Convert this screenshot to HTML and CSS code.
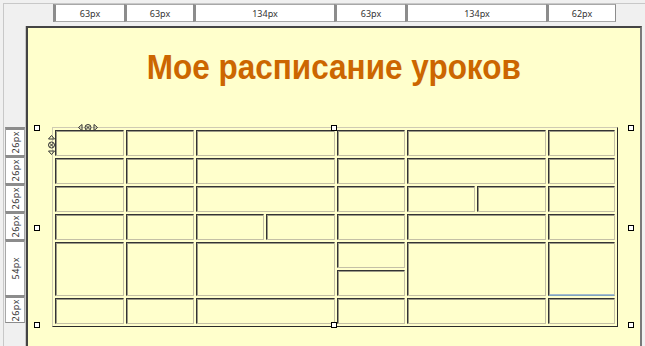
FILE: index.html
```html
<!DOCTYPE html>
<html lang="ru">
<head>
<meta charset="utf-8">
<title>Мое расписание уроков</title>
<link rel="stylesheet" href="styles.css">
</head>
<body>
<div class="editor">
  <div class="frame">
    <div class="top-ruler">
      <div class="rcell w71">63px</div>
      <div class="rcell w69">63px</div>
      <div class="rcell w141">134px</div>
      <div class="rcell w71">63px</div>
      <div class="rcell w141">134px</div>
      <div class="rcell w70 last">62px</div>
    </div>
    <div class="workspace">
      <div class="left-ruler">
        <div class="vcell"><span>26px</span></div>
        <div class="vcell"><span>26px</span></div>
        <div class="vcell"><span>26px</span></div>
        <div class="vcell"><span>26px</span></div>
        <div class="vcell tall"><span>54px</span></div>
        <div class="vcell last"><span>26px</span></div>
      </div>
      <div class="page">
        <h1 class="title"><span>Мое расписание уроков</span></h1>
        <div class="table-wrap">
          <div class="sched">
            <!-- row 1 -->
            <div class="cell"></div><div class="cell"></div><div class="cell s2"></div><div class="cell"></div><div class="cell s2"></div><div class="cell"></div>
            <!-- row 2 -->
            <div class="cell"></div><div class="cell"></div><div class="cell s2"></div><div class="cell"></div><div class="cell s2"></div><div class="cell"></div>
            <!-- row 3 -->
            <div class="cell"></div><div class="cell"></div><div class="cell s2"></div><div class="cell"></div><div class="cell"></div><div class="cell"></div><div class="cell"></div>
            <!-- row 4 -->
            <div class="cell"></div><div class="cell"></div><div class="cell"></div><div class="cell"></div><div class="cell"></div><div class="cell s2"></div><div class="cell"></div>
            <!-- row 5 (double height) -->
            <div class="cell r2"></div><div class="cell r2"></div><div class="cell s2 r2"></div><div class="cell"></div><div class="cell s2 r2"></div><div class="cell r2 sel"></div>
            <div class="cell"></div>
            <!-- row 6 -->
            <div class="cell"></div><div class="cell"></div><div class="cell s2"></div><div class="cell"></div><div class="cell s2"></div><div class="cell"></div>
          </div>
          <svg class="marker marker-h" width="20" height="7" viewBox="0 0 20 7">
            <polygon points="4,0.5 0.5,3.5 4,6.5" fill="none" stroke="#333" stroke-width="1"/>
            <circle cx="10" cy="3.5" r="3" fill="none" stroke="#333" stroke-width="1"/>
            <path d="M8.2 1.7 L11.8 5.3 M11.8 1.7 L8.2 5.3" stroke="#333" stroke-width="1"/>
            <polygon points="16,0.5 19.5,3.5 16,6.5" fill="none" stroke="#333" stroke-width="1"/>
          </svg>
          <svg class="marker marker-v" width="7" height="20" viewBox="0 0 7 20">
            <polygon points="0.5,4 3.5,0.5 6.5,4" fill="none" stroke="#333" stroke-width="1"/>
            <circle cx="3.5" cy="10" r="3" fill="none" stroke="#333" stroke-width="1"/>
            <path d="M1.7 8.2 L5.3 11.8 M5.3 8.2 L1.7 11.8" stroke="#333" stroke-width="1"/>
            <polygon points="0.5,16 3.5,19.5 6.5,16" fill="none" stroke="#333" stroke-width="1"/>
          </svg>
          <span class="handle h-tl"></span>
          <span class="handle h-tm"></span>
          <span class="handle h-tr"></span>
          <span class="handle h-ml"></span>
          <span class="handle h-mr"></span>
          <span class="handle h-bl"></span>
          <span class="handle h-bm"></span>
          <span class="handle h-br"></span>
        </div>
      </div>
    </div>
  </div>
</div>
</body>
</html>
```

FILE: styles.css
```css
* { box-sizing: border-box; }

html, body {
  margin: 0;
  padding: 0;
}

body {
  width: 645px;
  height: 346px;
  overflow: hidden;
  background: #f0f0f0;
  font-family: "Liberation Sans", Arial, sans-serif;
}

.editor {
  width: 645px;
  height: 346px;
  padding: 3px 0 0 3px;
}

.frame {
  height: 100%;
  border-top: 1px solid #c8c8c8;
  border-left: 1px solid #c8c8c8;
  display: flex;
  flex-direction: column;
}

/* top ruler */
.top-ruler {
  flex: none;
  height: 22px;
  display: flex;
  padding-left: 49px;
}

.rcell {
  height: 18px;
  background: #ffffff;
  border: 1px solid #a8a8a8;
  border-left: 3px solid #8c8c8c;
  border-right: none;
  font: 9px "Noto Sans", "DejaVu Sans", sans-serif;
  color: #333;
  display: flex;
  align-items: center;
  justify-content: center;
}
.rcell.last { border-right: 1px solid #8c8c8c; }
.w69 { width: 69px; }
.w70 { width: 70px; }
.w71 { width: 71px; }
.w141 { width: 141px; }

/* workspace */
.workspace {
  flex: 1;
  display: flex;
  min-height: 0;
}

.left-ruler {
  flex: none;
  width: 22px;
  border-right: 1px solid #c8c8c8;
  padding: 101px 0 0 1px;
  display: flex;
  flex-direction: column;
}

.vcell {
  height: 28px;
  background: #ffffff;
  border: 1px solid #a8a8a8;
  border-top: 3px solid #8c8c8c;
  border-bottom: none;
  display: flex;
  align-items: center;
  justify-content: center;
  font: 9px "Noto Sans", "DejaVu Sans", sans-serif;
  color: #333;
}
.vcell.tall { height: 56px; }
.vcell.last { border-bottom: 1px solid #8c8c8c; }
.vcell span {
  writing-mode: vertical-rl;
  transform: rotate(180deg);
  letter-spacing: 0.5px;
}

/* page */
.page {
  flex: none;
  width: 616px;
  background: #ffffcc;
  border-left: 2px solid #444444;
  border-top: 2px solid #444444;
  border-right: 2px solid #7a7a7a;
}

.title {
  margin: 0;
  padding-top: 19px;
  height: 59px;
  line-height: 40px;
  font-size: 35px;
  font-weight: bold;
  color: #cc6600;
  text-align: center;
  white-space: nowrap;
}
.title span {
  display: inline-block;
  transform: scaleX(0.9);
}

.table-wrap {
  position: relative;
  width: max-content;
  margin: 40px 0 0 24px;
}

.sched {
  display: grid;
  grid-template-columns: 69px 68px 68px 69px 68px 68px 69px 67px;
  grid-template-rows: repeat(7, 26px);
  gap: 2px;
  padding: 2px;
  border: 1px solid;
  border-color: #cfcbb2 #2a2a2a #2a2a2a #cfcbb2;
}

.cell {
  border: 1px solid;
  border-color: #333333 #c4c0a6 #c4c0a6 #333333;
  box-shadow: inset 1px 1px 0 #9c9a86;
}
.s2 { grid-column: span 2; }
.r2 { grid-row: span 2; }
.cell.sel {
  border-bottom-color: #7ea3c0;
  box-shadow: inset 1px 1px 0 #9c9a86, inset 0 -1px 0 #a4bccd;
}

.marker {
  position: absolute;
  display: block;
}
.marker-h { left: 26px; top: -3px; }
.marker-v { left: -4px; top: 8px; }

.handle {
  position: absolute;
  width: 6px;
  height: 6px;
  border: 1px solid #000;
  background: #fff;
}
.h-tl { left: -18px; top: -2px; }
.h-tm { left: 279px; top: -2px; }
.h-tr { left: 576px; top: -2px; }
.h-ml { left: -18px; top: 98px; }
.h-mr { left: 576px; top: 98px; }
.h-bl { left: -18px; top: 195px; }
.h-bm { left: 279px; top: 195px; }
.h-br { left: 576px; top: 195px; }
```
